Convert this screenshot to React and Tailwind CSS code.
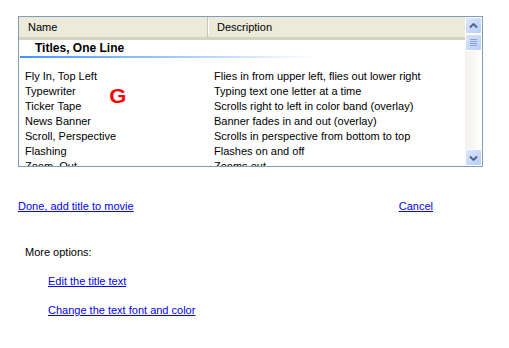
const ROWS = [
  ['Fly In, Top Left', 'Flies in from upper left, flies out lower right'],
  ['Typewriter', 'Typing text one letter at a time'],
  ['Ticker Tape', 'Scrolls right to left in color band (overlay)'],
  ['News Banner', 'Banner fades in and out (overlay)'],
  ['Scroll, Perspective', 'Scrolls in perspective from bottom to top'],
  ['Flashing', 'Flashes on and off'],
  ['Zoom, Out', 'Zooms out'],
]

function ScrollButton({ down }) {
  return (
    <div className="w-[17px] h-[17px] rounded-[2px] border border-white bg-gradient-to-br from-[#dbe6fd] to-[#b9cdf8] flex items-center justify-center">
      <svg width="9" height="6" viewBox="0 0 9 6">
        <path
          d={down ? 'M1 1.5 L4.5 5 L8 1.5' : 'M1 4.5 L4.5 1 L8 4.5'}
          fill="none"
          stroke="#4d6185"
          strokeWidth="1.8"
        />
      </svg>
    </div>
  )
}

function Scrollbar() {
  return (
    <div className="w-[17px] h-full flex flex-col bg-gradient-to-r from-[#f3f1ec] to-[#fefefb]">
      <ScrollButton />
      <div className="w-[17px] h-[17px] rounded-[2px] border border-white bg-gradient-to-br from-[#d6e2fd] to-[#bccff9] flex flex-col items-center justify-center gap-[1px]">
        {[0, 1, 2, 3].map((i) => (
          <div key={i} className="w-[7px] h-px bg-[#8ba4d8]" />
        ))}
      </div>
      <div className="flex-1" />
      <ScrollButton down />
    </div>
  )
}

export default function App() {
  return (
    <div
      className="w-[509px] h-[348px] bg-white relative text-[11px] leading-[15px] text-black"
      style={{ fontFamily: 'Tahoma, "Liberation Sans", sans-serif' }}
    >
      <div className="pt-4 pl-[18px]">
        {/* List view */}
        <div className="w-[465px] h-[151px] border border-[#7f9db9] flex overflow-hidden relative">
          <div className="flex-1 flex flex-col overflow-hidden">
            <div className="h-[23px] shrink-0 flex bg-[#ebeadb] border-b-[3px] border-[#d6d2c2]">
              <div className="w-[189px] pl-[9px] flex items-center border-r border-[#c7c5b2]">Name</div>
              <div className="w-px my-[3px] bg-white" />
              <div className="pl-[8px] flex items-center">Description</div>
            </div>
            <div className="h-[16px] shrink-0 flex items-center pl-[16px] font-bold text-[12px]">Titles, One Line</div>
            <div className="h-[2px] shrink-0 ml-[1px] w-[297px] bg-gradient-to-r from-[#3d95ff] via-[#9fc7ff] to-white" />
            <div className="pt-[11px]">
              {ROWS.map(([name, desc]) => (
                <div key={name} className="h-[15px] flex items-center">
                  <div className="w-[189px] pl-[6px] whitespace-nowrap">{name}</div>
                  <div className="pl-[6px] whitespace-nowrap">{desc}</div>
                </div>
              ))}
            </div>
          </div>
          <Scrollbar />
          <div className="absolute left-[91px] top-[69px] text-[#ff0000] font-bold text-[20px] leading-none scale-x-110">G</div>
        </div>
      </div>

      {/* Actions */}
      <div className="mt-[32px] pl-[18px] w-[433px] flex justify-between">
        <a href="#" className="text-[#0000ff] underline">Done, add title to movie</a>
        <a href="#" className="text-[#0000ff] underline">Cancel</a>
      </div>

      <div className="mt-[31px] pl-[25px]">More options:</div>
      <div className="pl-[48px] flex flex-col items-start gap-[14px] mt-[14px]">
        <a href="#" className="text-[#0000ff] underline">Edit the title text</a>
        <a href="#" className="text-[#0000ff] underline">Change the text font and color</a>
      </div>
    </div>
  )
}
